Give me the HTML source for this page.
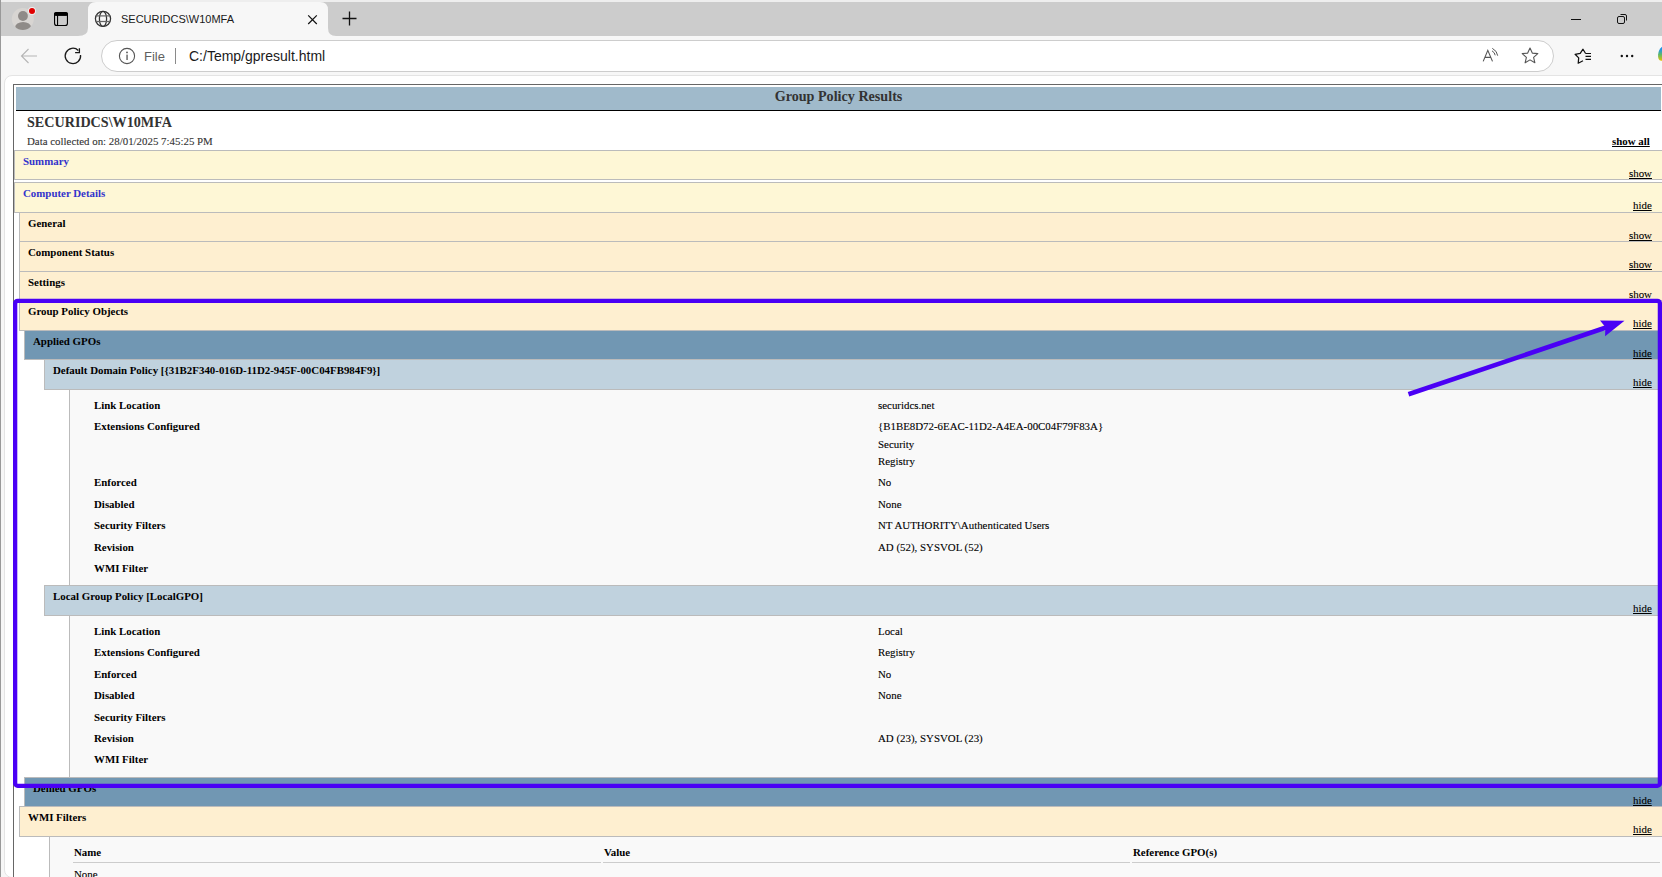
<!DOCTYPE html>
<html><head><meta charset="utf-8">
<style>
html,body{margin:0;padding:0;}
body{width:1662px;height:877px;overflow:hidden;position:relative;background:#f7f7f7;font-family:"Liberation Serif",serif;}
.a{position:absolute;}
.t{position:absolute;white-space:nowrap;line-height:20px;font-size:10.88px;color:#000;-webkit-text-stroke:0.1px currentColor;}
.b{-webkit-text-stroke:0 !important;}
.ui{-webkit-text-stroke:0 !important;}
.b{font-weight:bold;}
.h{position:absolute;box-sizing:border-box;border:1px solid #bbb;right:-20px;}
.ex{position:absolute;white-space:nowrap;line-height:20px;font-size:10.88px;color:#000;text-decoration:underline;right:10px;}
.ui{font-family:"Liberation Sans",sans-serif;}
</style></head><body>
<!-- browser chrome -->
<div class="a" style="left:0;top:0;width:1662px;height:2px;background:#eeeeee"></div>
<div class="a" style="left:0;top:2px;width:1662px;height:34px;background:#cccccc"></div>
<div class="a" style="left:0;top:36px;width:1662px;height:40px;background:#f7f7f7"></div>
<!-- active tab -->
<svg class="a" style="left:78px;top:0" width="262" height="37" viewBox="0 0 262 37">
<path d="M0 36 Q10 36 10 28 L10 10 Q10 2 18 2 L242 2 Q250 2 250 10 L250 28 Q250 36 258 36 Z" fill="#f7f7f7"/>
</svg>
<!-- profile -->
<svg class="a" style="left:0;top:0" width="80" height="36" viewBox="0 0 80 36">
<defs><clipPath id="pc"><circle cx="22.8" cy="19" r="11"/></clipPath></defs>
<circle cx="22.8" cy="19" r="11" fill="#d8d5d2"/>
<g clip-path="url(#pc)"><circle cx="22.95" cy="16" r="4.95" fill="#8f8b88"/><ellipse cx="23.1" cy="27.6" rx="8" ry="5.7" fill="#8f8b88"/></g>
<circle cx="32" cy="10.9" r="3.9" fill="#f0f2f2"/>
<circle cx="32" cy="10.9" r="3.0" fill="#e00000"/>
<rect x="54.55" y="12.55" width="12.9" height="12.9" rx="2.3" fill="none" stroke="#000" stroke-width="1.1"/>
<rect x="54" y="12" width="14" height="3.7" rx="2.3" fill="#000"/>
<rect x="54" y="14" width="14" height="1.7" fill="#000"/>
<rect x="57" y="15" width="1.1" height="10.6" fill="#000"/>
</svg>
<!-- globe -->
<svg class="a" style="left:90px;top:6px" width="26" height="26" viewBox="0 0 26 26">
<g fill="none" stroke="#333" stroke-width="1.25">
<circle cx="13" cy="12.85" r="7.6"/>
<ellipse cx="13" cy="12.85" rx="3.6" ry="7.6"/>
<line x1="5.8" y1="9.9" x2="20.2" y2="9.9" stroke="#666"/>
<line x1="5.8" y1="15.5" x2="20.2" y2="15.5" stroke="#666"/>
</g></svg>
<div class="t ui" style="left:121px;top:9px;font-size:11px;color:#1a1a1a">SECURIDCS\W10MFA</div>
<svg class="a" style="left:304px;top:11px" width="17" height="17" viewBox="0 0 17 17"><path d="M4.2 4.4 L12.8 13 M12.8 4.4 L4.2 13" stroke="#111" stroke-width="1.2"/></svg>
<svg class="a" style="left:340px;top:9px" width="19" height="19" viewBox="0 0 19 19"><path d="M9.5 2.5 V16.5 M2.5 9.5 H16.5" stroke="#111" stroke-width="1.3"/></svg>
<!-- window controls -->
<svg class="a" style="left:1566px;top:10px" width="20" height="20" viewBox="0 0 20 20"><path d="M5 9.5 H15" stroke="#111" stroke-width="1"/></svg>
<svg class="a" style="left:1612px;top:9px" width="20" height="20" viewBox="0 0 20 20"><rect x="5.5" y="7.5" width="7" height="7" rx="1.5" fill="none" stroke="#111" stroke-width="1"/><path d="M8.5 5.5 H13 Q14.5 5.5 14.5 7 V11.5" fill="none" stroke="#111" stroke-width="1"/></svg>
<!-- toolbar -->
<svg class="a" style="left:16px;top:43px" width="26" height="26" viewBox="0 0 26 26"><path d="M5.5 13 H21 M12.5 6 L5.5 13 L12.5 20" fill="none" stroke="#b5b5b5" stroke-width="1.1"/></svg>
<svg class="a" style="left:60px;top:43px" width="26" height="26" viewBox="0 0 26 26"><path d="M18.34 7.46 A7.7 7.7 0 1 0 20.54 11.96" fill="none" stroke="#1a1a1a" stroke-width="1.3"/><path d="M19.4 5.2 V9.6 H15.1" fill="none" stroke="#1a1a1a" stroke-width="1.3"/></svg>
<div class="a" style="left:101px;top:40px;width:1453px;height:32px;box-sizing:border-box;border:1px solid #cdcdcd;border-radius:16px;background:#fff"></div>
<svg class="a" style="left:114px;top:43px" width="26" height="26" viewBox="0 0 26 26"><circle cx="13" cy="13" r="7.6" fill="none" stroke="#555" stroke-width="1.1"/><rect x="12.4" y="11.6" width="1.3" height="5.4" fill="#555"/><circle cx="13" cy="9.4" r="0.9" fill="#555"/></svg>
<div class="t ui" style="left:144px;top:47px;font-size:13px;color:#5f5f5f">File</div>
<div class="a" style="left:175px;top:48px;width:1px;height:16px;background:#8a8a8a"></div>
<div class="t ui" style="left:189px;top:46px;font-size:14px;color:#1a1a1a">C:/Temp/gpresult.html</div>
<!-- read aloud -->
<svg class="a" style="left:1478px;top:43px" width="26" height="26" viewBox="0 0 26 26"><path d="M5.2 18.4 L9.8 7.4 L14.5 18.4 M6.9 14.4 H12.8" fill="none" stroke="#555" stroke-width="1.1"/><path d="M14 7.8 Q16.8 9.5 17.2 12.3 M14.3 5.3 Q19.2 8 19.7 12.7" fill="none" stroke="#555" stroke-width="1"/></svg>
<svg class="a" style="left:1517px;top:43px" width="26" height="26" viewBox="0 0 26 26"><path d="M13 5 L15.3 10.1 L20.8 10.6 L16.6 14.3 L17.9 19.8 L13 16.9 L8.1 19.8 L9.4 14.3 L5.2 10.6 L10.7 10.1 Z" fill="none" stroke="#555" stroke-width="1.1" stroke-linejoin="round"/></svg>
<svg class="a" style="left:1570px;top:43px" width="26" height="26" viewBox="0 0 26 26"><path d="M15.6 10.5 L13 6.2 L10.2 10.3 L5.1 11.3 L8.7 14.9 L8.2 20.2 L13 17.8" fill="none" stroke="#111" stroke-width="1.25" stroke-linejoin="round"/><path d="M15.5 10.5 H21 M15.5 13.4 H21 M15.5 16.4 H21" stroke="#111" stroke-width="1.2"/></svg>
<svg class="a" style="left:1614px;top:43px" width="26" height="26" viewBox="0 0 26 26"><circle cx="7.8" cy="13" r="1.2" fill="#111"/><circle cx="13" cy="13" r="1.2" fill="#111"/><circle cx="18.2" cy="13" r="1.2" fill="#111"/></svg>
<svg class="a" style="left:1655px;top:44px" width="7" height="24" viewBox="0 0 7 24"><defs><linearGradient id="cg" x1="0" y1="0" x2="0" y2="1"><stop offset="0" stop-color="#1a8cf0"/><stop offset="0.25" stop-color="#2a9ad8"/><stop offset="0.55" stop-color="#5cb86a"/><stop offset="1" stop-color="#e6c200"/></linearGradient></defs><path d="M7 2.8 Q3.6 5.5 3.1 10.5 Q2.6 16.6 6.2 16.8 L7 16.8 Z" fill="url(#cg)"/></svg>
<!-- content viewport -->
<div class="a" style="left:4px;top:75px;width:1670px;height:803px;box-sizing:border-box;border:1px solid #e4e4e4;border-radius:8px;background:#fff"></div>
<div class="a" style="left:0;top:0;width:1px;height:877px;background:#999"></div>
<!-- page -->
<div class="a" style="left:13px;top:84px;width:1700px;height:900px;border-left:1px solid #666;border-top:1px solid #666"></div>
<div class="a" style="left:16px;top:87px;width:1645px;height:23px;background:#a0bacb;border-bottom:1px solid #000"></div>
<div class="t b" style="left:16px;width:1645px;text-align:center;top:86px;font-size:14.14px;color:#333">Group Policy Results</div>
<div class="t b" style="left:27px;top:112px;font-size:14.14px;color:#333">SECURIDCS\W10MFA</div>
<div class="t" style="left:27px;top:131px;color:#333">Data collected on: 28/01/2025 7:45:25 PM</div>
<div class="t b" style="left:1612px;top:131px;text-decoration:underline">show all</div>

<div class="h" style="left:14px;top:150px;height:30px;background:#fef7d6"></div>
<div class="t b" style="left:23px;top:151px;color:#3333cc">Summary</div>
<div class="t" style="left:1629px;top:163px;text-decoration:underline">show</div>

<div class="h" style="left:14px;top:182px;height:31px;background:#fef7d6"></div>
<div class="t b" style="left:23px;top:183px;color:#3333cc">Computer Details</div>
<div class="t" style="left:1633px;top:195px;text-decoration:underline">hide</div>

<div class="h" style="left:19px;top:212px;height:30px;background:#feefd0"></div>
<div class="t b" style="left:28px;top:213px">General</div>
<div class="t" style="left:1629px;top:225px;text-decoration:underline">show</div>

<div class="h" style="left:19px;top:241px;height:31px;background:#feefd0"></div>
<div class="t b" style="left:28px;top:242px">Component Status</div>
<div class="t" style="left:1629px;top:254px;text-decoration:underline">show</div>

<div class="h" style="left:19px;top:271px;height:30px;background:#feefd0"></div>
<div class="t b" style="left:28px;top:272px">Settings</div>
<div class="t" style="left:1629px;top:284px;text-decoration:underline">show</div>

<div class="h" style="left:19px;top:300px;height:31px;background:#feefd0"></div>
<div class="t b" style="left:28px;top:301px">Group Policy Objects</div>
<div class="t" style="left:1633px;top:313px;text-decoration:underline">hide</div>

<div class="h" style="left:24px;top:330px;height:30px;background:#7197b3"></div>
<div class="t b" style="left:33px;top:331px">Applied GPOs</div>
<div class="t" style="left:1633px;top:343px;text-decoration:underline">hide</div>

<div class="h" style="left:44px;top:359px;height:31px;background:#c0d2de"></div>
<div class="t b" style="left:53px;top:360px">Default Domain Policy [{31B2F340-016D-11D2-945F-00C04FB984F9}]</div>
<div class="t" style="left:1633px;top:372px;text-decoration:underline">hide</div>

<div class="h" style="left:69px;top:389px;height:197px;background:#f9f9f9"></div>
<div class="t b" style="left:94px;top:395px">Link Location</div>
<div class="t b" style="left:94px;top:416px">Extensions Configured</div>
<div class="t b" style="left:94px;top:472px">Enforced</div>
<div class="t b" style="left:94px;top:494px">Disabled</div>
<div class="t b" style="left:94px;top:515px">Security Filters</div>
<div class="t b" style="left:94px;top:537px">Revision</div>
<div class="t b" style="left:94px;top:558px">WMI Filter</div>
<div class="t" style="left:878px;top:395px">securidcs.net</div>
<div class="t" style="left:878px;top:416px">{B1BE8D72-6EAC-11D2-A4EA-00C04F79F83A}</div>
<div class="t" style="left:878px;top:434px">Security</div>
<div class="t" style="left:878px;top:451px">Registry</div>
<div class="t" style="left:878px;top:472px">No</div>
<div class="t" style="left:878px;top:494px">None</div>
<div class="t" style="left:878px;top:515px">NT AUTHORITY\Authenticated Users</div>
<div class="t" style="left:878px;top:537px">AD (52), SYSVOL (52)</div>

<div class="h" style="left:44px;top:585px;height:31px;background:#c0d2de"></div>
<div class="t b" style="left:53px;top:586px">Local Group Policy [LocalGPO]</div>
<div class="t" style="left:1633px;top:598px;text-decoration:underline">hide</div>

<div class="h" style="left:69px;top:615px;height:163px;background:#f9f9f9"></div>
<div class="t b" style="left:94px;top:621px">Link Location</div>
<div class="t b" style="left:94px;top:642px">Extensions Configured</div>
<div class="t b" style="left:94px;top:664px">Enforced</div>
<div class="t b" style="left:94px;top:685px">Disabled</div>
<div class="t b" style="left:94px;top:707px">Security Filters</div>
<div class="t b" style="left:94px;top:728px">Revision</div>
<div class="t b" style="left:94px;top:749px">WMI Filter</div>
<div class="t" style="left:878px;top:621px">Local</div>
<div class="t" style="left:878px;top:642px">Registry</div>
<div class="t" style="left:878px;top:664px">No</div>
<div class="t" style="left:878px;top:685px">None</div>
<div class="t" style="left:878px;top:728px">AD (23), SYSVOL (23)</div>

<div class="h" style="left:24px;top:777px;height:30px;background:#7197b3"></div>
<div class="t b" style="left:33px;top:778px">Denied GPOs</div>
<div class="t" style="left:1633px;top:790px;text-decoration:underline">hide</div>

<div class="h" style="left:19px;top:806px;height:31px;background:#feefd0"></div>
<div class="t b" style="left:28px;top:807px">WMI Filters</div>
<div class="t" style="left:1633px;top:819px;text-decoration:underline">hide</div>

<div class="h" style="left:49px;top:836px;height:80px;background:#f9f9f9"></div>
<div class="t b" style="left:74px;top:842px">Name</div>
<div class="t b" style="left:604px;top:842px">Value</div>
<div class="t b" style="left:1133px;top:842px">Reference GPO(s)</div>
<div class="a" style="left:73px;top:862px;width:528px;height:1px;background:#ccc"></div>
<div class="a" style="left:603px;top:862px;width:527px;height:1px;background:#ccc"></div>
<div class="a" style="left:1132px;top:862px;width:528px;height:1px;background:#ccc"></div>
<div class="t" style="left:74px;top:864px">None</div>

<!-- annotation -->
<svg class="a" style="left:0;top:0" width="1662" height="877" viewBox="0 0 1662 877">
<rect x="15.15" y="300.9" width="1644.75" height="484.9" rx="2.5" fill="none" stroke="#4a00f5" stroke-width="4.3"/>
<line x1="1408.5" y1="394.3" x2="1606" y2="327.5" stroke="#4a00f5" stroke-width="4.6"/>
<path d="M1624.5 320.8 L1600 320.6 L1605.3 327 L1605.1 336.3 Z" fill="#4a00f5"/>
</svg>
</body></html>
